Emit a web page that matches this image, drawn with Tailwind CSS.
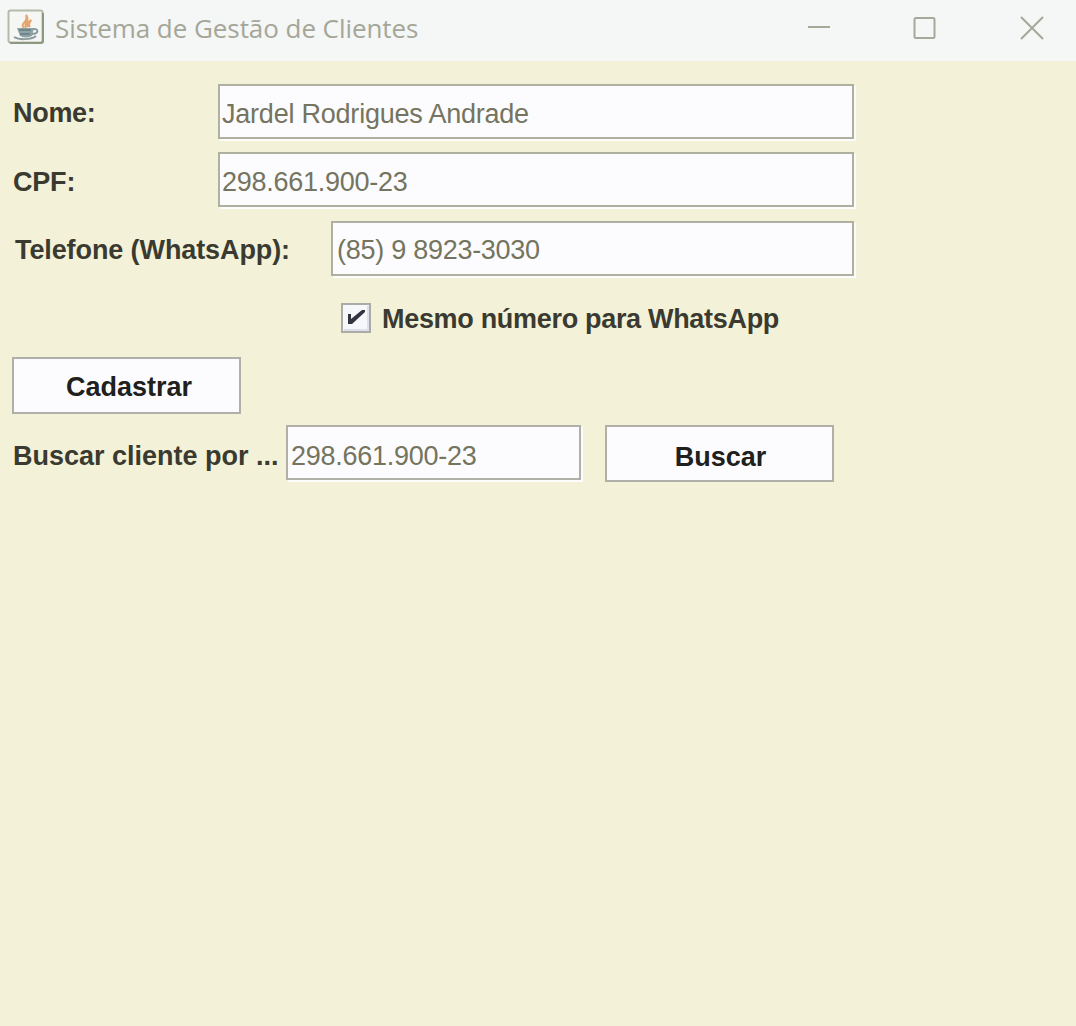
<!DOCTYPE html>
<html lang="pt-BR">
<head>
<meta charset="utf-8">
<title>Sistema de Gestão de Clientes</title>
<script src="https://cdn.jsdelivr.net/npm/@tailwindcss/browser@4"></script>
</head>
<body class="h-[1026px] w-[1076px] overflow-hidden bg-[#f3f2d9] font-['Liberation_Sans',Arial,sans-serif] text-[27px] leading-[51px] whitespace-nowrap text-[#74745f]">
<header class="flex h-[61px] items-start bg-[#f5f6f6] pl-[7px]">
  <svg class="mt-[9px] h-[36px] w-[38px] shrink-0" viewBox="0 0 38 36" fill="none">
    <rect x="1.5" y="1.5" width="34" height="32" rx="2" fill="#f6f7f5" stroke="#b4b9a8" stroke-width="2"/>
    <path d="M3 34h31q2 0 2-2V4" stroke="#8d9883" stroke-width="2"/>
    <path d="M17 19c-5-4 5-6 2-13 5 5-3 8 0 13M21 18c-3-4 1-5 3-7-1 3-4 4-1 7" stroke="#e6a56e" stroke-width="2"/>
    <path d="M10 19h17l-2 8q-6 3-12 0z" fill="#8fa3a5"/>
    <path d="M26 20c6-1 6 5-1 5M7 28c5 3 17 3 22-1" stroke="#8a9b9c" stroke-width="2"/>
    <path d="M12 21h12M13 25h10" stroke="#657e86" stroke-width="1.5"/>
  </svg>
  <h1 class="ml-[10px] mt-[10px] font-['Open_Sans','Noto_Sans',sans-serif] text-[26px] leading-9 tracking-[-0.06px] text-[#a4a798]">Sistema de Gestão de Clientes</h1>
  <div class="ml-auto flex pr-[32px] pt-4 text-[#a5a99a]">
    <svg class="mr-[81px] size-6" fill="none" stroke="currentColor" stroke-width="2"><path d="M1 11h22"/></svg>
    <svg class="mr-[84px] size-6" fill="none" stroke="currentColor" stroke-width="2"><rect x="2.5" y="2" width="20" height="20" rx="1.5"/></svg>
    <svg class="size-6" fill="none" stroke="currentColor" stroke-width="2"><path d="m1 1 22 22M23 1 1 23"/></svg>
  </div>
</header>
<main class="flex flex-col pl-[13px] pt-[23px]">
  <div class="flex h-[55px]">
    <div class="w-[205px] pt-1 font-bold tracking-[-0.3px] text-[#3a3a30]">Nome:</div>
    <div class="h-[55px] w-[636px] border-2 border-[#b0b0a0] bg-[#fcfcfe] pl-[2px] pt-[3px] tracking-[-0.22px] shadow-[2px_2px_0_#fcfcfc]">Jardel Rodrigues Andrade</div>
  </div>
  <div class="mt-[13px] flex h-[55px]">
    <div class="w-[205px] pt-[5px] font-bold tracking-[-0.2px] text-[#3a3a30]">CPF:</div>
    <div class="h-[55px] w-[636px] border-2 border-[#b0b0a0] bg-[#fcfcfe] pl-[2px] pt-[3px] tracking-[-0.27px] shadow-[2px_2px_0_#fcfcfc]">298.661.900-23</div>
  </div>
  <div class="mt-[14px] flex h-[55px]">
    <div class="w-[318px] pl-[2px] pt-1 font-bold tracking-[-0.1px] text-[#3a3a30]">Telefone (WhatsApp):</div>
    <div class="h-[55px] w-[523px] border-2 border-[#b0b0a0] bg-[#fcfcfe] pl-1 pt-[2px] tracking-[-0.27px] shadow-[2px_2px_0_#fcfcfc]">(85) 9 8923-3030</div>
  </div>
  <label class="ml-[327px] mt-[26px] flex h-[31px]">
    <svg class="size-[31px]" fill="none"><rect x="2" y="2" width="28" height="28" fill="#f6f7fa" stroke="#a9ada5" stroke-width="2"/><path d="M4 28h24V4" stroke="#dedfeb" stroke-width="2"/><path d="M8 12h3v5L22 8h3v2L12 22H8z" fill="#343440"/></svg>
    <span class="-mt-[8px] ml-[11px] font-bold tracking-[-0.31px] text-[#3a3a30]">Mesmo número para WhatsApp</span>
  </label>
  <button class="-ml-px mt-[24px] block h-[57px] w-[229px] border-2 border-[#b0b0a8] bg-[#fcfcfe] pl-[5px] pt-[4px] text-center font-bold leading-[49px] text-[#20201c]">Cadastrar</button>
  <div class="mt-[11px] flex h-[57px]">
    <div class="w-[273px] pt-[6px] font-bold text-[#3a3a30]">Buscar cliente por ...</div>
    <div class="h-[55px] w-[295px] border-2 border-[#b0b0a8] bg-[#fcfcfe] pl-[3px] pt-[4px] tracking-[-0.27px] shadow-[2px_2px_0_#fcfcfc]">298.661.900-23</div>
    <button class="ml-6 block h-[57px] w-[229px] border-2 border-[#b0b0a8] bg-[#fcfcfe] pl-[2px] pt-[6px] text-center font-bold leading-[49px] text-[#20201c]">Buscar</button>
  </div>
</main>
</body>
</html>
